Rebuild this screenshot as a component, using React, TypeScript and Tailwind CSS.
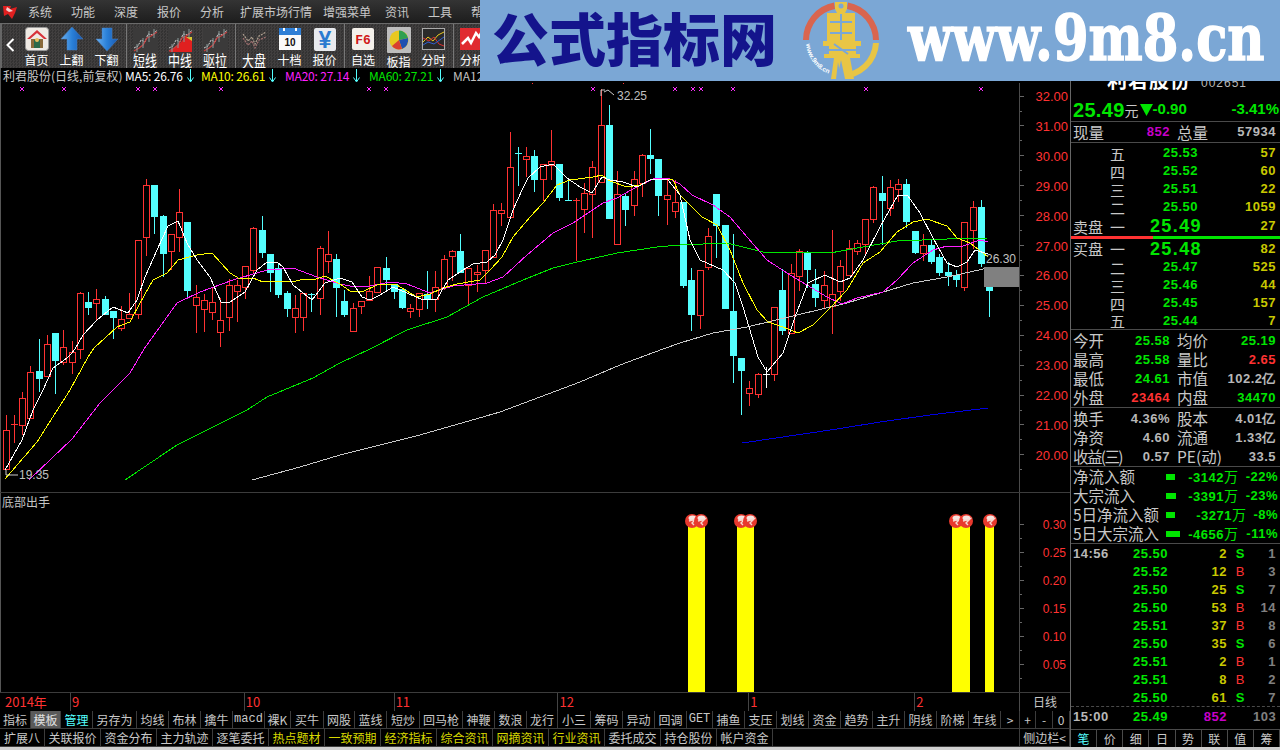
import React from "react";

const SANS = '"Liberation Sans","Noto Sans CJK SC",sans-serif';
const RED = "#ff3232";
const CY = "#54ffff";

// type, bodyTop, bodyBottom, wickTop, wickBottom
type C = [string, number, number, number, number];
const candles: C[] = [
  ["r",430,469,415,469],["r",424,424,415,442],["r",398,425,392,434],["r",372,418,366,418],["c",371,378,339,391],
  ["r",344,376,335,376],["c",333,360,333,393],["r",347,362,330,364],["r",352,362,341,373],["r",293,349,292,358],
  ["c",302,307,292,314],["r",299,303,289,320],["c",299,314,296,314],["c",311,317,311,338],["r",319,328,306,330],
  ["r",314,318,293,318],["r",240,314,240,318],["r",185,237,179,255],["c",185,216,185,233],["c",216,253,215,276],
  ["r",234,251,234,269],["r",212,237,189,251],["c",222,290,222,296],["r",297,305,285,332],["r",300,309,294,331],
  ["r",302,312,288,319],["r",320,332,298,346],["r",285,317,279,330],["r",285,291,280,321],["r",266,287,266,298],
  ["r",228,270,227,272],["c",230,252,216,257],["c",254,272,254,291],["c",268,294,263,297],["c",293,308,291,316],
  ["r",308,317,295,332],["r",293,317,293,330],["c",294,294,293,311],["r",248,298,246,314],["r",254,261,231,272],
  ["c",259,287,254,316],["c",301,314,290,316],["r",308,331,303,331],["r",301,306,301,313],["r",291,300,276,300],
  ["r",267,292,267,292],["c",268,279,257,290],["c",284,291,284,298],["c",289,307,289,308],["r",308,311,304,317],
  ["r",293,309,293,316],["c",294,299,271,308],["r",287,299,271,311],["r",259,287,255,289],["r",251,256,250,280],
  ["c",251,272,234,272],["r",268,285,268,304],["r",272,274,265,291],["r",250,270,250,282],["r",210,257,204,257],
  ["r",210,213,203,225],["r",167,217,132,217],["c",153,153,147,185],["r",156,159,147,176],["c",156,179,150,191],
  ["r",164,179,164,200],["r",161,165,130,179],["c",164,197,164,200],["c",200,200,179,200],["r",200,200,198,260],
  ["r",193,209,183,232],["r",167,194,161,237],["r",125,182,89,182],["c",125,218,105,218],["r",194,244,171,244],
  ["c",196,209,193,225],["r",179,205,171,215],["r",155,183,154,196],["c",155,158,129,173],["c",159,195,159,215],
  ["r",195,199,180,224],["r",202,211,180,217],["c",202,285,202,287],["c",280,314,268,330],["r",270,315,270,328],
  ["r",236,267,228,269],["c",194,225,194,257],["c",225,308,225,308],["c",311,355,234,382],["c",358,370,358,414],
  ["r",388,393,381,405],["r",374,394,373,397],["w",374,374,367,387],["r",307,374,307,380],["c",290,330,269,334],
  ["r",273,333,264,333],["r",251,276,249,290],["c",252,269,251,287],["c",284,297,269,306],["r",285,300,271,307],
  ["r",294,306,230,333],["r",266,291,260,300],["r",248,275,240,275],["r",243,251,240,254],["r",219,244,219,254],
  ["r",187,219,186,222],["c",193,200,176,244],["r",187,208,180,215],["r",184,189,179,201],["c",184,221,179,227],
  ["c",231,252,231,253],["r",245,253,234,260],["c",245,261,240,263],["c",257,272,254,275],["c",272,275,262,285],
  ["c",275,279,270,286],["r",222,287,222,290],["r",207,230,201,248],["c",207,263,200,266],["c",287,290,287,316],
];

const pts = (a: number[][]) => a.map((p) => p.join(",")).join(" ");
const ma5 = [[5,470],[22,440],[33,410],[43,390],[53,368],[67,358],[72,353],[75,349],[83,335],[97,320],[113,307],[128,313],[137,300],[145,277],[157,250],[168,226],[178,221],[187,243],[197,260],[210,277],[221,302],[230,302],[245,292],[257,270],[267,262],[277,262],[283,267],[293,285],[312,300],[325,283],[340,278],[352,282],[362,297],[370,300],[380,295],[393,287],[407,293],[423,300],[437,299],[448,280],[463,270],[473,264],[487,262],[495,255],[503,240],[513,210],[522,190],[528,178],[540,167],[553,164],[567,178],[580,187],[592,193],[602,177],[610,180],[623,182],[637,187],[652,179],[668,180],[680,195],[690,240],[700,260],[723,270],[735,283],[743,307],[758,357],[767,372],[783,353],[795,317],[808,283],[825,275],[840,282],[850,278],[863,260],[880,227],[898,195],[908,196],[920,213],[933,238],[947,263],[957,267],[967,262],[975,250],[988,254]];
const ma10 = [[5,479],[37,442],[70,390],[88,357],[94,348],[117,327],[130,322],[140,303],[153,280],[167,273],[178,260],[197,255],[212,253],[230,273],[240,279],[253,278],[263,282],[280,281],[293,282],[303,279],[313,280],[325,276],[340,284],[350,291],[362,292],[377,285],[395,284],[417,297],[430,294],[443,288],[457,284],[480,280],[490,270],[502,257],[513,237],[530,217],[543,203],[557,185],[570,180],[593,177],[602,175],[610,181],[627,187],[640,185],[652,179],[673,180],[680,195],[702,217],[717,225],[730,250],[743,283],[757,310],[768,322],[783,327],[798,333],[813,325],[830,308],[847,290],[863,263],[880,252],[897,232],[913,222],[927,219],[947,226],[957,238],[970,243],[988,257]];
const ma20 = [[29,480],[72,439],[100,403],[130,373],[144,349],[177,303],[200,292],[233,280],[267,270],[293,268],[317,277],[340,284],[350,286],[370,286],[390,282],[407,284],[430,293],[453,286],[487,283],[503,277],[527,255],[553,233],[573,223],[603,203],[617,198],[640,185],[653,179],[668,178],[680,184],[692,195],[713,205],[730,217],[747,237],[767,260],[790,275],[807,285],[827,297],[842,304],[857,298],[883,292],[897,280],[913,263],[933,250],[947,246],[963,246],[980,240],[988,242]];
const ma60 = [[125,480],[177,445],[247,410],[267,397],[313,378],[340,363],[370,349],[407,330],[447,317],[483,297],[523,280],[553,268],[573,263],[617,253],[657,247],[680,245],[727,243],[763,252],[797,252],[830,253],[863,247],[897,241],[947,239],[988,238]];
const ma120 = [[252,480],[300,467],[340,455],[420,435],[500,412],[580,382],[620,365],[663,349],[680,343],[713,333],[747,327],[797,315],[847,303],[880,293],[913,283],[947,277],[988,268]];
const ma250 = [[742,443],[837,429],[880,422],[930,415],[988,408]];

const marks = [22,64,138,155,221,369,386,593,675,693,701,733,866,981];
const prices = ["32.00","31.00","30.00","29.00","28.00","27.00","26.00","25.00","24.00","23.00","22.00","21.00","20.00"];

function MainChart() {
  return (
    <svg width="1070" height="410" viewBox="0 83 1070 410" className="block shrink-0">
      <line x1="0.5" y1="83" x2="0.5" y2="493" stroke="#555" />
      <line x1="532.5" y1="83" x2="532.5" y2="84" stroke={RED} />
      <line x1="623.5" y1="83" x2="623.5" y2="84" stroke={RED} />
      <g shapeRendering="crispEdges">
        {marks.map((x) => (
          <g key={x} stroke="#ff30ff">
            <line x1={x - 2} y1={87} x2={x + 2} y2={91} />
            <line x1={x + 2} y1={87} x2={x - 2} y2={91} />
          </g>
        ))}
        {candles.map((c, i) => {
          const x = Math.round(5.5 + 8.265 * i);
          const [t, top, bot, wt, wb] = c;
          const col = t === "r" ? RED : t === "c" ? CY : "#fff";
          return (
            <g key={i}>
              <line x1={x + 0.5} y1={wt} x2={x + 0.5} y2={wb + 1} stroke={col} />
              {top === bot ? (
                <line x1={x - 3} y1={top + 0.5} x2={x + 4} y2={top + 0.5} stroke={col} />
              ) : t === "r" ? (
                <rect x={x - 2.5} y={top + 0.5} width={6} height={bot - top} fill="#000" stroke={col} />
              ) : (
                <rect x={x - 3} y={top} width={7} height={bot - top + 1} fill={col} />
              )}
            </g>
          );
        })}
        <polyline points={pts(ma120)} fill="none" stroke="#c8c8c8" />
        <polyline points={pts(ma250)} fill="none" stroke="#0000e0" />
        <polyline points={pts(ma60)} fill="none" stroke="#00e800" />
        <polyline points={pts(ma20)} fill="none" stroke="#ff20ff" />
        <polyline points={pts(ma10)} fill="none" stroke="#ffff00" />
        <polyline points={pts(ma5)} fill="none" stroke="#ffffff" />
        <rect x="984" y="267" width="35" height="20" fill="#808080" />
        <line x1="1019.5" y1="83" x2="1019.5" y2="493" stroke="#4a4a4a" />
        {prices.map((_, i) => {
          const y = 96 + i * 29.9;
          return (
            <g key={i} stroke="#666">
              <line x1="1020" y1={y} x2="1024" y2={y} />
              <line x1="1020" y1={y + 15} x2="1022" y2={y + 15} />
            </g>
          );
        })}
        <line x1="0" y1="492.5" x2="1070" y2="492.5" stroke="#3c3c3c" />
      </g>
      {prices.map((p, i) => (
        <text key={p} x="1068" y={101 + i * 29.9} textAnchor="end" fill={RED} fontSize="13" fontFamily={SANS}>{p}</text>
      ))}
      <polyline points="601,96 601,90 605,90" fill="none" stroke="#ccc" />
      <polyline points="604,92 608,90 614,95" fill="none" stroke="#ccc" />
      <text x="617" y="100" fill="#c0c0c0" fontSize="12" fontFamily={SANS}>32.25</text>
      <polyline points="6,470 6,475 18,475" fill="none" stroke="#ccc" />
      <text x="19" y="479" fill="#c0c0c0" fontSize="12" fontFamily={SANS}>19.35</text>
      <text x="986" y="263" fill="#c0c0c0" fontSize="12" fontFamily={SANS}>26.30</text>
    </svg>
  );
}

function Ball({ x }: { x: number }) {
  return (
    <g>
      <circle cx={x} cy={521} r={7} fill="#e8392e" />
      <ellipse cx={x + 0.5} cy={518} rx={4} ry={2.5} fill="#f4e4e0" />
      <path d={`M${x - 3} 521 L${x + 4} 519 L${x} 523 L${x + 2} 525`} fill="none" stroke="#f6d8d0" strokeWidth="1.4" />
    </g>
  );
}

function SubChart() {
  const lab = ["0.30","0.25","0.20","0.15","0.10","0.05"];
  return (
    <svg width="1070" height="199" viewBox="0 493 1070 199" className="block shrink-0">
      <line x1="0.5" y1="493" x2="0.5" y2="692" stroke="#555" />
      <g shapeRendering="crispEdges">
        <rect x="688" y="526" width="17" height="166" fill="#ffff00" />
        <rect x="737" y="526" width="17" height="166" fill="#ffff00" />
        <rect x="952" y="526" width="18" height="166" fill="#ffff00" />
        <rect x="985" y="526" width="9" height="166" fill="#ffff00" />
        <line x1="1019.5" y1="493" x2="1019.5" y2="692" stroke="#4a4a4a" />
        {lab.map((_, i) => (
          <g key={i} stroke="#666">
            <line x1="1020" y1={524 + i * 28} x2="1024" y2={524 + i * 28} />
            <line x1="1020" y1={538 + i * 28} x2="1022" y2={538 + i * 28} />
          </g>
        ))}
      </g>
      {[692, 701, 741, 750, 956, 966, 990].map((x) => <Ball key={x} x={x} />)}
      {lab.map((l, i) => (
        <text key={l} x="1066" y={529 + i * 28} textAnchor="end" fill={RED} fontSize="12" fontFamily={SANS}>{l}</text>
      ))}
      <text x="2" y="507" fill="#c4c4c4" fontSize="12" fontFamily='"Noto Sans CJK SC",sans-serif'>底部出手</text>
    </svg>
  );
}

const months: [string, number][] = [["2014年",70],["9",174],["10",150],["11",164],["12",191],["1",166],["2",105]];

function XAxis() {
  return (
    <div className="flex h-[19px] shrink-0 border-t border-[#3c3c3c]">
      <div className="flex w-[1020px] border-r border-[#4a4a4a]">
        {months.map(([m, w], i) => (
          <div key={m} style={{ width: w }} className={`text-[13px] leading-[18px] pl-[1px] text-[#ff3232] ${i === 0 ? "pl-[5px]" : "border-l border-[#444]"}`}>{m}</div>
        ))}
      </div>
      <div className="flex-1 text-center text-[12px] leading-[18px] text-[#c8c8c8]">日线</div>
    </div>
  );
}

const tabs1: [string, number, string?][] = [["指标",31],["模板",30,"sel"],["管理",32,"c"],["另存为",44],["均线",32],["布林",32],["擒牛",32],["macd",32,"m"],["裸K",26],["买牛",33],["网股",31],["蓝线",32],["短炒",33],["回马枪",43],["神鞭",32],["数浪",32],["龙行",31],["小三",33],["筹码",32],["异动",32],["回调",32],["GET",26,"m"],["捕鱼",32],["支压",32],["划线",32],["资金",32],["趋势",32],["主升",32],["阴线",32],["阶梯",32],["年线",32],[">",19],["+",16],["-",17],["0",17]];
const tabs2: [string, number, string?][] = [["扩展八",45],["关联报价",56],["资金分布",56],["主力轨迹",56],["逐笔委托",56],["热点题材",56,"y"],["一致预期",56,"y"],["经济指标",56,"y"],["综合资讯",56,"y"],["网摘资讯",56,"y"],["行业资讯",56,"y"],["委托成交",56],["持仓股份",56],["帐户资金",56],["",247],["侧边栏<",50]];

function TabRow({ items }: { items: [string, number, string?][] }) {
  return (
    <div className="flex h-[18px] shrink-0 border-b border-[#3c3c3c]">
      {items.map(([t, w, k], i) => (
        <div
          key={i}
          style={{ width: w }}
          className={`shrink-0 border-r border-[#3c3c3c] text-center text-[12px] leading-[17px] whitespace-nowrap overflow-hidden ${k === "sel" ? "bg-[#5a5a5a] text-[#e0e0e0]" : k === "c" ? "text-[#54ffff]" : k === "y" ? "text-[#d8d800]" : "text-[#c8c8c8]"} ${k === "m" ? "font-['Liberation_Mono'] text-[11px]" : ""}`}
        >
          {t}
        </div>
      ))}
    </div>
  );
}

const Arrow = () => (
  <svg width="7" height="14" viewBox="0 0 7 14" className="ml-[4px] shrink-0">
    <path d="M3.5 0V12M0.5 8.5L3.5 13L6.5 8.5" fill="none" stroke="#54ffff" />
  </svg>
);

function Legend() {
  const items: [string, string, number][] = [["MA5: 26.76","#ffffff",76],["MA10: 26.61","#ffff00",84],["MA20: 27.14","#ff20ff",84],["MA60: 27.21","#00e800",84]];
  return (
    <div className="flex h-[15px] shrink-0 items-center pl-[2px] text-[12px] leading-[15px] whitespace-nowrap overflow-hidden border-l border-[#555]">
      <span className="w-[122px] shrink-0 text-[#c8c8c8]">利君股份(日线,前复权)</span>
      {items.map(([t, c, w]) => (
        <div key={t} style={{ width: w }} className="flex shrink-0 items-center">
          <span style={{ color: c }} className="tracking-[-0.2px]">{t}</span>
          <Arrow />
        </div>
      ))}
      <span className="text-[#c0c0c0]">MA120: 26.30</span>
    </div>
  );
}

/* ---------- toolbar icons ---------- */
const Home = () => (
  <svg width="24" height="24" viewBox="0 0 24 24">
    <rect x="0.5" y="0.5" width="23" height="23" rx="3" fill="#efeae4" stroke="#999" />
    <path d="M2 12L12 3L22 12L19 12L12 6L5 12Z" fill="#d8333a" />
    <rect x="6" y="12" width="12" height="9" fill="#8a6a3a" />
    <rect x="9" y="13" width="6" height="8" fill="#2a6a4a" />
    <circle cx="12" cy="13" r="2" fill="#e8c060" />
  </svg>
);
const UpA = ({ down }: { down?: boolean }) => (
  <svg width="22" height="24" viewBox="0 0 22 24" className={down ? "rotate-180" : ""}>
    <defs>
      <linearGradient id={down ? "gd" : "gu"} x1="0" y1="0" x2="1" y2="0">
        <stop offset="0" stopColor={down ? "#1a58b0" : "#6ab0f0"} />
        <stop offset="0.5" stopColor="#2a80d8" />
        <stop offset="1" stopColor={down ? "#6ab0f0" : "#1a58b0"} />
      </linearGradient>
    </defs>
    <path d="M11 0L22 12H16V23H6V12H0Z" fill={`url(#${down ? "gd" : "gu"})`} stroke="#4a80c0" strokeWidth="0.5" />
  </svg>
);
const Scribble = ({ red }: { red?: boolean }) => (
  <svg width="25" height="25" viewBox="0 0 25 25">
    <rect width="25" height="25" fill="#3b3a3a" />
    {red && <path d="M1 24L13 14L18 8L24 12V24Z" fill="#e02020" />}
    {red && <path d="M18 9L24 9V13Z" fill="#d8c830" />}
    <path d="M1 20L5 18L8 12L12 14L15 6L20 7L24 2" fill="none" stroke="#cfcfcf" strokeWidth="1" strokeDasharray="2 1" />
    <path d="M1 23L6 20L10 17L14 10L18 8L24 4" fill="none" stroke="#c84040" strokeWidth="1.2" />
    <path d="M4 24V16M10 20V10M16 14V3M21 10V1" fill="none" stroke="#8a9a9a" />
  </svg>
);
const Wave = () => (
  <svg width="25" height="25" viewBox="0 0 25 25">
    <path d="M1 6L6 13L10 9L13 16L17 8L24 4" fill="none" stroke="#b0a090" strokeWidth="1.2" strokeDasharray="2 1" />
    <path d="M1 10L6 17L10 13L13 20L17 12L24 9" fill="none" stroke="#a07070" strokeWidth="1.2" strokeDasharray="2 1" />
  </svg>
);
const Cal = () => (
  <svg width="22" height="22" viewBox="0 0 22 22">
    <rect width="22" height="22" fill="#fafafa" />
    <rect width="22" height="7" fill="#2f7fd6" />
    <rect x="4" y="0" width="2" height="3" fill="#fff" />
    <rect x="16" y="0" width="2" height="3" fill="#fff" />
    <text x="11" y="18" textAnchor="middle" fontSize="10" fontWeight="700" fill="#111" fontFamily={SANS}>10</text>
  </svg>
);
const Yen = () => (
  <svg width="22" height="23" viewBox="0 0 22 23">
    <rect width="22" height="23" rx="2" fill="#e8eaee" />
    <text x="11" y="20" textAnchor="middle" fontSize="23" fontWeight="700" fill="#2a7ad0" fontFamily={SANS}>¥</text>
  </svg>
);
const F6 = () => (
  <svg width="22" height="22" viewBox="0 0 22 22">
    <rect width="22" height="22" rx="2" fill="#f4f0ea" />
    <text x="11" y="16" textAnchor="middle" fontSize="13" fontWeight="700" fill="#d01818" fontFamily='"Liberation Mono",monospace'>F6</text>
  </svg>
);
const Pie = () => (
  <svg width="24" height="26" viewBox="0 0 24 26">
    <rect width="24" height="26" rx="1" fill="#bdbdbd" />
    <circle cx="12" cy="13" r="9.5" fill="#e8c820" />
    <path d="M12 13L12 3.5A9.5 9.5 0 0 1 21 11Z" fill="#30a050" />
    <path d="M12 13L21 11A9.5 9.5 0 0 1 15 22Z" fill="#2050b0" />
    <path d="M12 13L15 22A9.5 9.5 0 0 1 5 19Z" fill="#d84030" />
  </svg>
);
const Time = () => (
  <svg width="23" height="22" viewBox="0 0 23 22">
    <rect x="0.5" y="0.5" width="22" height="21" fill="#2a2a2a" stroke="#aaa" />
    <path d="M1 14L6 9L11 13L16 7L22 4" fill="none" stroke="#e8c820" />
    <path d="M1 10L7 13L12 9L17 16L22 18" fill="none" stroke="#d83030" />
    <path d="M1 17L6 14L12 16L22 9" fill="none" stroke="#3060d0" />
  </svg>
);
const Ana = () => (
  <svg width="24" height="22" viewBox="0 0 24 22">
    <rect width="24" height="22" fill="#e02b30" />
    <path d="M2 16L8 10L11 15L16 5L19 9L22 3" fill="none" stroke="#fff" strokeWidth="2.5" />
  </svg>
);

const tools: { l: string; i: React.ReactNode; w: number; low?: boolean }[][] = [
  [{ l: "首页", i: <Home />, w: 35 }, { l: "上翻", i: <UpA />, w: 35 }, { l: "下翻", i: <UpA down />, w: 35 }],
  [{ l: "短线", i: <Scribble />, w: 36, low: true }, { l: "中线", i: <Scribble red />, w: 35, low: true }, { l: "驱拉", i: <Scribble />, w: 35, low: true }],
  [{ l: "大盘", i: <Wave />, w: 36, low: true }, { l: "十档", i: <Cal />, w: 35 }, { l: "报价", i: <Yen />, w: 35 }],
  [{ l: "自选", i: <F6 />, w: 36 }, { l: "板指", i: <Pie />, w: 35 }, { l: "分时", i: <Time />, w: 35 }],
  [{ l: "分析", i: <Ana />, w: 36 }],
];

function Toolbar() {
  return (
    <div className="flex h-[45px] shrink-0 overflow-hidden border-t border-[#6a6a6a] bg-[#393838] bg-[repeating-conic-gradient(#413f3f_0%_25%,#333232_0%_50%)] bg-[length:3px_3px]">
      <div className="flex w-[19px] shrink-0 items-center justify-center pb-[2px] text-white border-l-2 border-[#666]">
        <svg width="9" height="14" viewBox="0 0 9 14"><path d="M7.5 1L1.5 7L7.5 13" fill="none" stroke="#fff" strokeWidth="2" /></svg>
      </div>
      {tools.map((g, gi) => (
        <div key={gi} className="flex shrink-0 border-r border-[#777] pr-[2px]">
          {g.map((t) => (
            <div key={t.l} style={{ width: t.w }} className="flex shrink-0 flex-col items-center">
              <div className="flex h-[26px] mt-[3px] items-center justify-center">{t.i}</div>
              <div className={`leading-[16px] text-white ${t.low ? "-mt-[1px] text-[16px] scale-x-[0.75] whitespace-nowrap" : "mt-[1px] text-[12px]"}`}>{t.l}</div>
            </div>
          ))}
        </div>
      ))}
    </div>
  );
}

const menu: [string, number][] = [["系统",43],["功能",43],["深度",43],["报价",43],["分析",40],["扩展市场行情",83],["增强菜单",62],["资讯",43],["工具",43],["帮助",43]];

function MenuBar() {
  return (
    <div className="flex h-[23px] shrink-0 items-center bg-gradient-to-b from-[#343434] to-[#1d1d1d]">
      <svg width="16" height="16" viewBox="0 0 16 16" className="ml-[2px] mr-[10px] shrink-0">
        <path d="M1 2H9L8 5L15 3L13 9L10 15L6 10L2 12Z" fill="#e02020" />
        <path d="M5 3L11 7L7 8L4 6Z" fill="#f4d0d0" />
      </svg>
      {menu.map(([m, w]) => (
        <div key={m} style={{ width: w }} className="shrink-0 text-[12px] text-[#c8c8c8]">{m}</div>
      ))}
    </div>
  );
}

/* ---------- right panel ---------- */
const NUM = "font-['Liberation_Sans'] font-bold text-[13px] tracking-[0.5px]";
const G = "text-[#00e600]";
const Y = "text-[#c8c800]";
const W = "text-[#b8b8b8]";
const LB = "text-[15.5px] text-[#c8c8c8] leading-[19px] whitespace-nowrap font-['Noto_Sans_CJK_SC']";

function Level({ lab, side, p, v, big, h }: { lab: string; side?: string; p: string; v: string; big?: boolean; h: number }) {
  return (
    <div style={{ height: h }} className="grid grid-cols-[37px_23px_65px_1fr] items-center pl-[2px] pr-[4px] overflow-hidden">
      <span className="text-[15px] leading-none whitespace-nowrap text-[#c8c8c8]">{side}</span>
      <span className="text-[15px] leading-none text-[#c8c8c8]">{lab}</span>
      <span className={`text-right ${NUM} ${G} ${big ? "text-[18px] leading-[18px] tracking-[1.4px] -mr-[4px]" : "leading-[16px]"}`}>{p}</span>
      <span className={`text-right leading-[16px] ${NUM} ${Y}`}>{v}</span>
    </div>
  );
}

function Stat({ a, av, ac, b, bv, bc, tight }: { a: string; av: string; ac: string; b: string; bv: string; bc: string; tight?: boolean }) {
  return (
    <div className="grid h-[19px] grid-cols-[32px_65px_32px_1fr] items-center pl-[2px] pr-[4px] whitespace-nowrap">
      <span className={`${LB} ${tight ? "tracking-[-1.6px]" : ""}`}>{a}</span>
      <span className={`text-right ${NUM} ${ac}`}>{av}</span>
      <span className={`${LB} ml-[7px]`}>{b}</span>
      <span className={`text-right ${NUM} ${bc}`}>{bv}</span>
    </div>
  );
}

function Flow({ l, w, v, p, end }: { l: string; w: number; v: string; p: string; end: number }) {
  return (
    <div className="relative flex h-[19px] items-center pl-[2px] whitespace-nowrap">
      <span className={`${LB} w-[93px] shrink-0`}>{l}</span>
      <span style={{ width: w }} className="h-[6px] shrink-0 bg-[#00e600]" />
      <span style={{ width: end - 1165 - w }} className={`shrink-0 text-right ${NUM} ${G}`}>
        {v}<span className="font-normal text-[14px] tracking-normal font-['Noto_Sans_CJK_SC']">万</span>
      </span>
      <span style={{ width: 1277 - end }} className={`shrink-0 text-right ${NUM} ${G}`}>{p}</span>
    </div>
  );
}

function Trade({ t, p, v, s, n, last }: { t?: string; p: string; v: string; s?: string; n: string; last?: boolean }) {
  return (
    <div className="grid h-[18px] grid-cols-[45px_50px_59px_26px_23px] items-center pl-[2px]">
      <span className={`${NUM} ${W}`}>{t}</span>
      <span className={`text-right ${NUM} ${G}`}>{p}</span>
      <span className={`text-right ${NUM} ${last ? "text-[#c800c8]" : Y}`}>{v}</span>
      <span className={`text-center text-[13px] font-['Liberation_Sans'] ${s === "B" ? "text-[#ff3232]" : "text-[#00e600] font-bold"}`}>{s}</span>
      <span className={`text-right ${NUM} text-[#808080]`}>{n}</span>
    </div>
  );
}

function Panel() {
  return (
    <div className="flex h-[679px] w-[210px] shrink-0 flex-col border-l border-[#666] font-['Noto_Sans_CJK_SC']">
      <div className="flex h-[30px] shrink-0 items-end overflow-hidden pb-[7px] pl-[36px] gap-[10px] whitespace-nowrap">
        <span className="text-[20px] font-bold tracking-[1px] leading-[22px] text-white">利君股份</span>
        <span className="font-['Liberation_Sans'] text-[12px] tracking-[1px] leading-[16px] text-[#b8b8b8]">002651</span>
      </div>
      <div className="flex h-[24px] shrink-0 items-center border-b border-[#4a4a4a] pl-[2px] pr-[1px] whitespace-nowrap">
        <span className={`font-['Liberation_Sans'] text-[20px] font-bold tracking-[0.3px] ${G}`}>25.49</span>
        <span className="text-[14px] text-[#c8c8c8] leading-none">元</span>
        <svg width="13" height="12" viewBox="0 0 13 12" className="ml-[1px] shrink-0"><path d="M0 0H13L6.5 12Z" fill="#00e600" /></svg>
        <span className={`font-['Liberation_Sans'] text-[15px] font-bold ${G}`}>-0.90</span>
        <span className={`ml-auto font-['Liberation_Sans'] text-[15px] font-bold ${G}`}>-3.41%</span>
      </div>
      <div className="grid h-[21px] shrink-0 grid-cols-[32px_65px_32px_1fr] items-center border-b border-[#4a4a4a] pl-[2px] pr-[4px] whitespace-nowrap">
        <span className={LB}>现量</span>
        <span className={`text-right ${NUM} text-[#c800c8]`}>852</span>
        <span className={`${LB} ml-[7px]`}>总量</span>
        <span className={`text-right ${NUM} ${W}`}>57934</span>
      </div>
      <div className="mt-[1px] flex shrink-0 flex-col">
        <Level lab="五" p="25.53" v="57" h={18} />
        <Level lab="四" p="25.52" v="60" h={18} />
        <Level lab="三" p="25.51" v="22" h={18} />
        <Level lab="二" p="25.50" v="1059" h={18} />
        <Level lab="一" side="卖盘" p="25.49" v="27" big h={20} />
      </div>
      <div className="flex h-[3px] shrink-0">
        <span className="w-[82px] bg-[#ff3232]" />
        <span className="flex-1 bg-[#00e600]" />
      </div>
      <div className="flex shrink-0 flex-col border-b border-[#4a4a4a]">
        <Level lab="一" side="买盘" p="25.48" v="82" big h={19} />
        <Level lab="二" p="25.47" v="525" h={18} />
        <Level lab="三" p="25.46" v="44" h={18} />
        <Level lab="四" p="25.45" v="157" h={18} />
        <Level lab="五" p="25.44" v="7" h={17} />
      </div>
      <div className="flex shrink-0 flex-col border-b border-[#4a4a4a] pt-[1px]">
        <Stat a="今开" av="25.58" ac={G} b="均价" bv="25.19" bc={G} />
        <Stat a="最高" av="25.58" ac={G} b="量比" bv="2.65" bc="text-[#ff3232]" />
        <Stat a="最低" av="24.61" ac={G} b="市值" bv="102.2亿" bc={W} />
        <Stat a="外盘" av="23464" ac="text-[#ff3232]" b="内盘" bv="34470" bc={G} />
      </div>
      <div className="flex shrink-0 flex-col border-b border-[#4a4a4a] pt-[1px]">
        <Stat a="换手" av="4.36%" ac={W} b="股本" bv="4.01亿" bc={W} />
        <Stat a="净资" av="4.60" ac={W} b="流通" bv="1.33亿" bc={W} />
        <Stat a="收益(三)" tight av="0.57" ac={W} b="PE(动)" bv="33.5" bc={W} />
      </div>
      <div className="flex shrink-0 flex-col border-b border-[#4a4a4a]">
        <Flow l="净流入额" w={9} v="-3142" p="-22%" end={1237} />
        <Flow l="大宗流入" w={10} v="-3391" p="-23%" end={1237} />
        <Flow l="5日净流入额" w={9} v="-3271" p="-8%" end={1245} />
        <Flow l="5日大宗流入" w={14} v="-4656" p="-11%" end={1237} />
      </div>
      <div className="flex shrink-0 flex-col border-b border-dashed border-[#4a4a4a]">
        <Trade t="14:56" p="25.50" v="2" s="S" n="1" />
        <Trade p="25.52" v="12" s="B" n="3" />
        <Trade p="25.50" v="25" s="S" n="7" />
        <Trade p="25.50" v="53" s="B" n="14" />
        <Trade p="25.51" v="37" s="B" n="8" />
        <Trade p="25.50" v="35" s="S" n="6" />
        <Trade p="25.51" v="2" s="B" n="1" />
        <Trade p="25.51" v="8" s="B" n="2" />
        <Trade p="25.50" v="61" s="S" n="7" />
      </div>
      <div className="h-[23px] shrink-0 border-b border-[#4a4a4a]">
        <Trade t="15:00" p="25.49" v="852" n="103" last />
      </div>
      <div className="grid h-[18px] shrink-0 grid-cols-8 border-b border-[#4a4a4a]">
        {["笔","价","细","日","势","联","值","筹"].map((t, i) => (
          <div key={t} className={`border-r border-[#4a4a4a] text-center text-[12px] leading-[17px] ${i === 0 ? "text-[#54ffff]" : "text-[#c8c8c8]"}`}>{t}</div>
        ))}
      </div>
    </div>
  );
}

/* ---------- watermark banner ---------- */
function Logo() {
  return (
    <svg width="82" height="81" viewBox="0 0 82 81" className="shrink-0">
      <defs>
        <path id="rim" d="M6 44 A35.5 35.5 0 0 0 42 76" fill="none" />
      </defs>
      <path d="M3 40 A38 38 0 0 1 34 2.5 L35 9 A32 32 0 0 0 9 40 Z" fill="#d9654f" />
      <path d="M79 40 A38 38 0 0 0 48 2.5 L47 9 A32 32 0 0 1 73 40 Z" fill="#d9654f" />
      <path d="M79 43 A38 38 0 0 1 41 79 L41 73 A32 32 0 0 0 73 43 Z" fill="#e8c545" />
      <text fontSize="6.5" fill="#ffffff" fontWeight="700" fontFamily={SANS}>
        <textPath href="#rim">www.9m8.cn</textPath>
      </text>
      <path d="M35 2H47V9L45 13H55V41H61V46H56V54H60V58H50L54 79H41L38 62L36 79H31L34 58H24V54H29V46H23V41H27V13H37L35 9Z" fill="#e8c545" />
      <circle cx="41" cy="6" r="2.5" fill="#7ba7d5" />
      <path d="M30 22H52M30 33H52M26 50H56" stroke="#7ba7d5" strokeWidth="2" />
      <path d="M41 14V40M34 44L48 54" stroke="#7ba7d5" strokeWidth="2" />
      <path d="M41 60L37 79H45Z" fill="#7ba7d5" />
    </svg>
  );
}

function Banner() {
  return (
    <div className="absolute right-0 top-0 flex h-[81px] w-[800px] items-center bg-[#7ba7d5]">
      <div className="-mt-[10px] ml-[12px] w-[285px] shrink-0 whitespace-nowrap text-[57px] font-black leading-[70px] text-[#14148c] font-['Noto_Sans_CJK_SC']">公式指标网</div>
      <div className="ml-[23px]"><Logo /></div>
      <div className="-mt-[6px] ml-[26px] origin-left scale-x-[0.8] whitespace-nowrap text-[64px] font-bold leading-[70px] text-white [-webkit-text-stroke:1.5px_white] font-['DejaVu_Serif']">www.9m8.cn</div>
    </div>
  );
}

export default function App() {
  return (
    <div className="relative flex h-[750px] w-[1280px] flex-col overflow-hidden bg-black font-['Noto_Sans_CJK_SC','Liberation_Sans',sans-serif]">
      <MenuBar />
      <Toolbar />
      <div className="flex h-[679px] shrink-0">
        <div className="flex w-[1070px] shrink-0 flex-col">
          <Legend />
          <MainChart />
          <SubChart />
          <XAxis />
          <TabRow items={tabs1} />
          <TabRow items={tabs2} />
        </div>
        <Panel />
      </div>
      <div className="h-[3px] shrink-0 bg-[#d0d0d0]" />
      <Banner />
    </div>
  );
}
